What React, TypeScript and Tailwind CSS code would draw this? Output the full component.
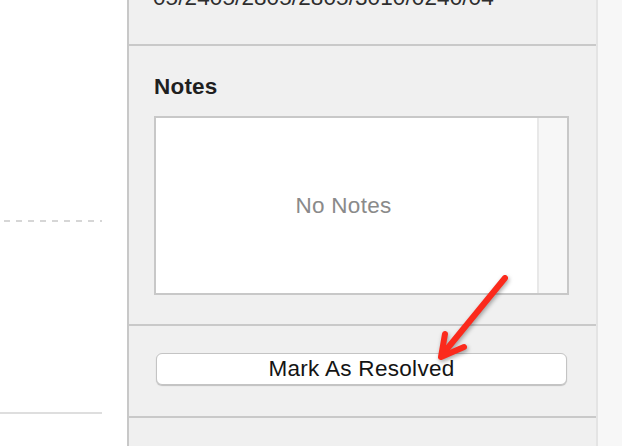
import React from 'react';

const font = { fontFamily: '"Liberation Sans", Arial, sans-serif' };

function Separator() {
  return <div className="h-[2px] bg-[#c9c9c9] shrink-0" />;
}

function RedArrow() {
  return (
    <svg
      className="absolute inset-0 pointer-events-none drop-shadow-[1px_2px_2px_rgba(0,0,0,0.35)]"
      width={622}
      height={446}
      viewBox="0 0 622 446"
    >
      <g fill="none" stroke="#fb2a1c" strokeWidth={6} strokeLinecap="round" strokeLinejoin="round">
        <path d="M505 278 L442 355" />
        <path d="M445 334 L441 357 L464 347" />
      </g>
    </svg>
  );
}

export default function App() {
  return (
    <div className="relative flex w-[622px] h-[446px] overflow-hidden bg-white" style={font}>
      {/* left canvas */}
      <div className="w-[127px] shrink-0 flex flex-col">
        <div className="h-[220px]" />
        <div className="ml-[4px] w-[98px] h-[2px] bg-[repeating-linear-gradient(90deg,#d6d6d6_0_6px,transparent_6px_12px)]" />
        <div className="h-[190px]" />
        <div className="w-[102px] h-[2px] bg-[#dedede]" />
      </div>

      {/* inspector panel */}
      <div className="w-[471px] shrink-0 flex flex-col bg-[#f0f0f0] border-l-2 border-r-2 border-l-[#c8c8c8] border-r-[#e4e4e4]">
        <div className="h-[44px] pl-[24px] overflow-hidden">
          <div className="-mt-[15px] text-[22.5px] leading-[26px] tracking-[0.1px] text-[#2e2e2e] whitespace-nowrap">
            05/2405/2805/2805/3010/0240/04
          </div>
        </div>
        <Separator />

        <div className="pl-[25px] pr-[27px] pt-[28px] pb-[29px]">
          <div className="text-[22.5px] leading-[26px] font-bold tracking-[0.2px] text-[#1f1f1f] mb-[16px]">Notes</div>
          <div className="h-[179px] flex border-2 border-[#c8c8c8] bg-white">
            <div className="flex-1 flex items-center justify-center pr-[6px] text-[22.5px] tracking-[0.3px] text-[#8a8a8a]">
              No Notes
            </div>
            <div className="w-[30px] bg-[#f7f7f7] border-l-2 border-[#e8e8e8]" />
          </div>
        </div>
        <Separator />

        <div className="pl-[27px] pr-[29px] pt-[27px] pb-[31px]">
          <button className="w-full h-[32px] flex items-center justify-center rounded-[6px] bg-white border border-[#c4c4c4] shadow-[0_1px_1px_rgba(0,0,0,0.2)] text-[22.5px] tracking-[0.3px] text-[#141414]">
            Mark As Resolved
          </button>
        </div>
        <Separator />
        <div className="flex-1" />
      </div>

      {/* right strip */}
      <div className="flex-1 bg-[#f7f7f7]" />

      <RedArrow />
    </div>
  );
}
